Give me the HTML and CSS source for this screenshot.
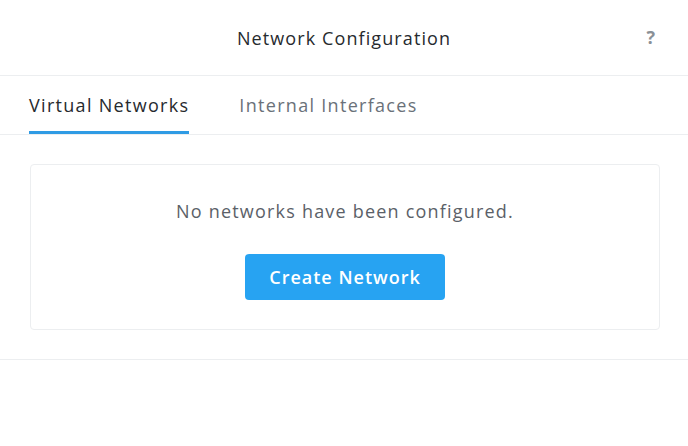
FILE: index.html
```html
<!DOCTYPE html>
<html>
<head>
<meta charset="utf-8">
<link rel="stylesheet" href="styles.css">
</head>
<body>
<div class="modal">
  <header class="header">
    <div class="title">Network Configuration</div>
    <div class="help">?</div>
  </header>
  <nav class="tabs">
    <div class="tab active">Virtual Networks</div>
    <div class="tab">Internal Interfaces</div>
  </nav>
  <main class="body">
    <div class="card">
      <p class="empty">No networks have been configured.</p>
      <button class="btn">Create Network</button>
    </div>
  </main>
</div>
</body>
</html>
```
FILE: styles.css
```css
* { box-sizing: border-box; }
html, body { margin: 0; padding: 0; background: #fff; }
body { font-family: "Open Sans", "Liberation Sans", sans-serif; color: #333; }
.modal { width: 688px; }
.header {
  height: 76px;
  display: flex;
  align-items: center;
  justify-content: center;
  position: relative;
  border-bottom: 1px solid #eceef0;
}
.title { font-size: 18px; letter-spacing: 1.1px; font-weight: 500; color: #262a2e; }
.help {
  position: absolute;
  right: 33px;
  top: 25px;
  font-size: 18px;
  font-weight: bold;
  color: #8a9096;
}
.tabs {
  height: 59px;
  display: flex;
  gap: 50px;
  padding-left: 29px;
  border-bottom: 1px solid #eceef0;
}
.tab {
  display: flex;
  align-items: center;
  font-size: 18px;
  letter-spacing: 1.3px;
  font-weight: 500;
  color: #6a7179;
  border-bottom: 3px solid transparent;
  padding-top: 3px;
}
.tab.active { color: #262a2e; border-bottom-color: #2f9be4; }
.body {
  padding: 29px 28px 29px 30px;
  border-bottom: 1px solid #eceef0;
}
.card {
  border: 1px solid #eceef0;
  border-radius: 4px;
  height: 166px;
  display: flex;
  flex-direction: column;
  align-items: center;
  padding-top: 34px;
}
.empty { margin: 0; font-size: 18px; letter-spacing: 1.2px; color: #5b6168; }
.btn {
  margin-top: 31px;
  width: 200px;
  height: 46px;
  border: none;
  border-radius: 4px;
  background: #27a3f2;
  color: #fff;
  font-family: "Open Sans", "Liberation Sans", sans-serif;
  font-size: 18px;
  letter-spacing: 1px;
  font-weight: 600;
}
```
